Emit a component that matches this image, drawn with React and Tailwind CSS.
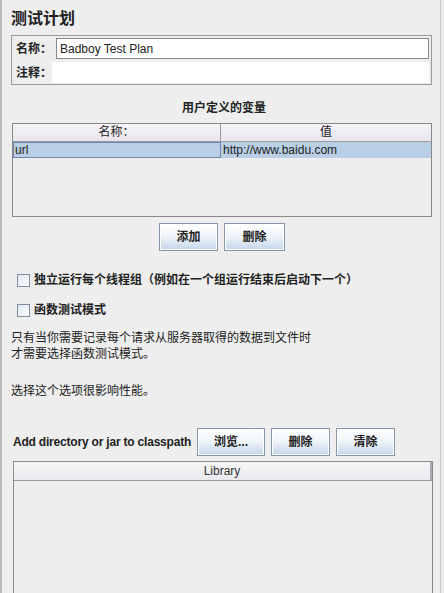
import React from 'react';

const font = { fontFamily: '"Liberation Sans", "Noto Sans CJK SC", sans-serif' };

const Btn = ({ children, w }) => (
  <button
    className={`h-[28px] ${w} shrink-0 border border-[#8796ab] bg-gradient-to-b from-[#ffffff] via-[#eef3f9] to-[#c3d5ea] text-[12px] leading-[16px] font-bold text-[#222] shadow-[inset_0_0_0_1px_#ffffff]`}
  >
    {children}
  </button>
);

const Check = ({ children }) => (
  <div className="flex items-center h-[16px] gap-[4px] pl-[6px]">
    <span className="w-[13px] h-[13px] border border-[#7f8ea3] bg-gradient-to-br from-[#dfe6ef] to-[#ffffff]" />
    <span className="text-[12px] leading-[16px] font-bold text-[#222]">{children}</span>
  </div>
);

const App = () => {
  return (
    <div className="w-[444px] h-[593px] overflow-hidden bg-[#eeeeee] flex" style={font}>
      <div className="w-[441px] h-full border-l-2 border-r border-l-[#b9b9b9] border-r-[#c8c8c8] flex flex-col px-[9px]">
        <h1 className="mt-[8px] h-[22px] text-[16px] leading-[22px] font-bold text-[#222]">测试计划</h1>

        <div className="mt-[5px] w-[421px] h-[50px] border border-[#9a9a9a] px-[2px] pt-[2px] pb-[1px] flex flex-col gap-[3px]">
          <div className="flex items-center h-[21px]">
            <span className="w-[42px] pl-[2px] text-[12px] leading-[16px] font-bold text-[#222]">名称：</span>
            <div className="flex-1 h-[21px] bg-white border border-[#8a8a8a] flex items-center px-[3px] text-[12px] leading-[16px] text-[#222]">
              Badboy Test Plan
            </div>
          </div>
          <div className="flex items-center h-[21px]">
            <span className="w-[38px] pl-[2px] text-[12px] leading-[16px] font-bold text-[#222]">注释：</span>
            <div className="flex-1 h-[21px] bg-white" />
          </div>
        </div>

        <div className="mt-[15px] h-[16px] text-center text-[12px] leading-[16px] font-bold text-[#222] pl-[6px]">用户定义的变量</div>

        <div className="mt-[7px] ml-[1px] w-[420px] h-[94px] border border-[#8a8a8a] bg-[#eeeeee] flex flex-col">
          <div className="flex h-[18px] bg-gradient-to-b from-[#f6f4f8] to-[#e8e6ee] border-b border-[#9a9a9a] text-[12px] text-[#222]">
            <div className="w-[208px] border-r border-[#9a9a9a] text-center leading-[17px]">名称：</div>
            <div className="flex-1 text-center leading-[17px]">值</div>
          </div>
          <div className="flex h-[16px] bg-[#b8cfe5] text-[12px] text-[#222]">
            <div className="w-[208px] border border-[#6f86ad] leading-[14px] px-[1px]">url</div>
            <div className="flex-1 leading-[16px] px-[2px]">http://www.baidu.com</div>
          </div>
        </div>

        <div className="mt-[6px] flex justify-center gap-[6px] pl-[2px]">
          <Btn w="w-[59px]">添加</Btn>
          <Btn w="w-[61px]">删除</Btn>
        </div>

        <div className="mt-[21px]">
          <Check>独立运行每个线程组（例如在一个组运行结束后启动下一个）</Check>
        </div>
        <div className="mt-[14px]">
          <Check>函数测试模式</Check>
        </div>

        <div className="mt-[12px] text-[12px] leading-[16px] text-[#222]">
          <div className="h-[16px]">只有当你需要记录每个请求从服务器取得的数据到文件时</div>
          <div className="h-[16px]">才需要选择函数测试模式。</div>
          <div className="mt-[21px] h-[16px]">选择这个选项很影响性能。</div>
        </div>

        <div className="mt-[29px] h-[28px] flex items-center gap-[6px] pl-[2px]">
          <span className="w-[178px] whitespace-nowrap text-[12px] leading-[16px] font-bold tracking-[-0.2px] text-[#222]">
            Add directory or jar to classpath
          </span>
          <Btn w="w-[68px]">浏览...</Btn>
          <Btn w="w-[59px]">删除</Btn>
          <Btn w="w-[59px]">清除</Btn>
        </div>

        <div className="mt-[5px] ml-[2px] w-[420px] flex-1 border border-[#8a8a8a] border-b-0 bg-[#eeeeee]">
          <div className="h-[19px] border-b border-[#9a9a9a] bg-gradient-to-b from-[#f6f6f6] to-[#e9e9ee] text-center text-[12px] leading-[18px] text-[#333] border-r-2 border-r-[#a8a8b0]">
            Library
          </div>
        </div>
      </div>
    </div>
  );
};

export default App;
